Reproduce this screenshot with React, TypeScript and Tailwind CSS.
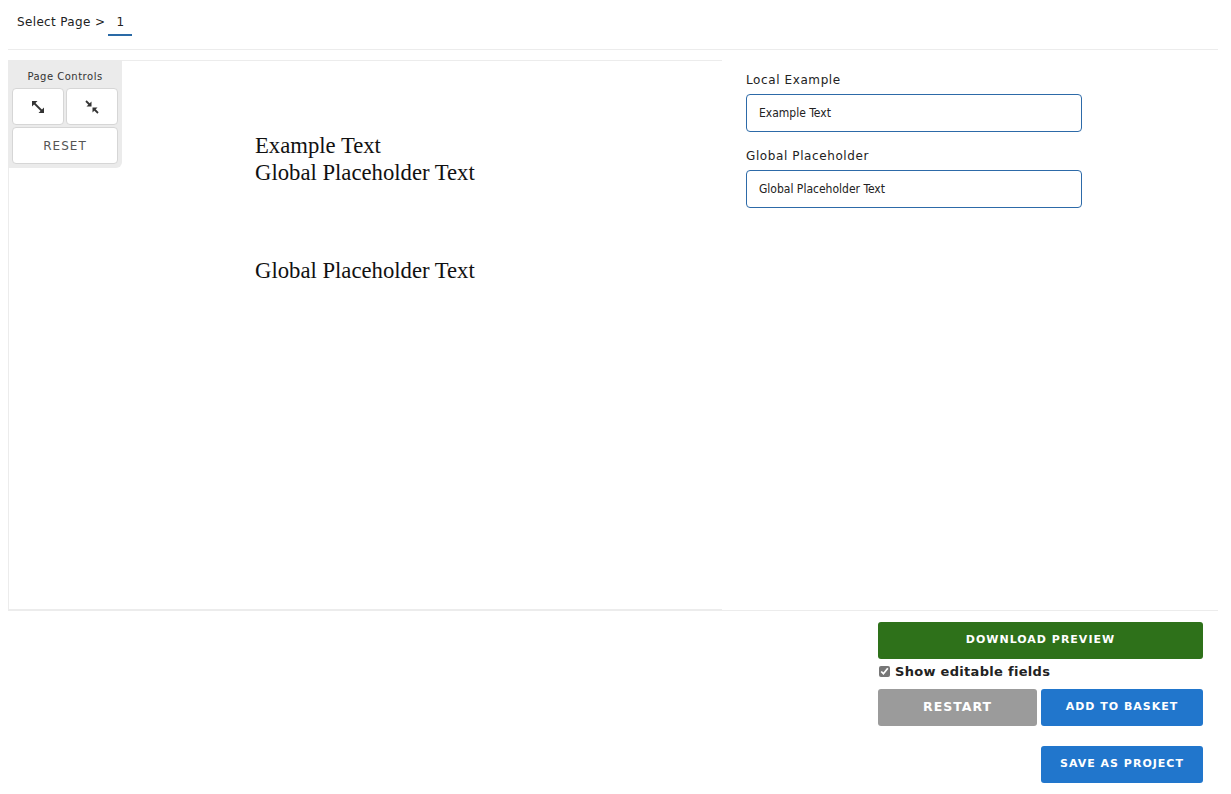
import React from "react";

function ExpandIcon() {
  return (
    <svg width="14" height="14" viewBox="0 0 14 14" fill="none">
      <path d="M3 3 L11 11" stroke="#333" strokeWidth="1.8" />
      <path d="M1 1 H6.5 L1 6.5 Z" fill="#333" />
      <path d="M13 13 H7.5 L13 7.5 Z" fill="#333" />
    </svg>
  );
}

function CompressIcon() {
  return (
    <svg width="14" height="14" viewBox="0 0 14 14" fill="none">
      <path d="M1 1 L5 5" stroke="#333" strokeWidth="1.8" />
      <path d="M9 9 L13 13" stroke="#333" strokeWidth="1.8" />
      <path d="M6.5 6.5 H1.5 L6.5 1.5 Z" fill="#333" />
      <path d="M7.5 7.5 H12.5 L7.5 12.5 Z" fill="#333" />
    </svg>
  );
}

export default function App() {
  return (
    <div className="min-h-[794px] bg-white font-['DejaVu_Sans',Verdana,sans-serif] text-[#222]">
      <div className="ml-2 mr-[13px]">
        {/* Page selector */}
        <div className="flex h-[50px] items-start border-b border-[#ececec] pl-[9px] pt-[14px]">
          <span className="text-[12px] leading-[17px] tracking-[0.35px] text-[#222]">Select Page &gt;</span>
          <span className="ml-[3px] flex h-[22px] w-[24px] items-start justify-center border-b-2 border-[#2a6aa6] text-[12px] leading-[17px] text-[#222]">
            1
          </span>
        </div>

        {/* Editor */}
        <div className="mt-[10px] flex">
          <div className="relative h-[551px] w-[714px] border-l border-t border-b-2 border-[#ececec]">
            <div className="absolute left-[-1px] top-[-1px] w-[114px] rounded-br-[6px] bg-[#ebebeb] px-[4px] pb-[4px] pt-[9px]">
              <div className="text-center text-[10px] tracking-[0.5px] text-[#333]">Page Controls</div>
              <div className="mt-[4px] grid grid-cols-2 gap-[2px]">
                <button className="flex h-[37px] items-center justify-center rounded-[4px] border border-[#d6d6d6] bg-white">
                  <ExpandIcon />
                </button>
                <button className="flex h-[37px] items-center justify-center rounded-[4px] border border-[#d6d6d6] bg-white">
                  <CompressIcon />
                </button>
                <button className="col-span-2 flex h-[37px] items-center justify-center rounded-[4px] border border-[#d6d6d6] bg-white text-[12px] tracking-[1px] text-[#555]">
                  RESET
                </button>
              </div>
            </div>

            <div className="pl-[246px] pt-[71px] font-['Liberation_Serif','Times_New_Roman',serif] text-[22.7px] leading-[27px] text-[#111]">
              <div>Example Text</div>
              <div>Global Placeholder Text</div>
              <div className="mt-[71px]">Global Placeholder Text</div>
            </div>
          </div>

          <div className="flex-1 border-b border-[#ececec] pl-[24px] pt-[11px]">
            <label className="block text-[12px] tracking-[0.6px] text-[#222]">Local Example</label>
            <input
              readOnly
              value="Example Text"
              className="mt-[5px] h-[38px] w-[336px] rounded-[4px] border border-[#2d6aa8] px-[12px] font-['DejaVu_Sans_Condensed','DejaVu_Sans',sans-serif] text-[12px] text-[#222] outline-none"
            />
            <label className="mt-[15px] block text-[12px] tracking-[0.6px] text-[#222]">Global Placeholder</label>
            <input
              readOnly
              value="Global Placeholder Text"
              className="mt-[5px] h-[38px] w-[336px] rounded-[4px] border border-[#2d6aa8] px-[12px] font-['DejaVu_Sans_Condensed','DejaVu_Sans',sans-serif] text-[12px] text-[#222] outline-none"
            />
          </div>
        </div>

        {/* Actions */}
        <div className="flex justify-end pr-[15px] pt-[11px]">
          <div className="w-[325px]">
            <button className="flex h-[37px] w-full items-center justify-center rounded-[3px] bg-[#2e711a] text-[11px] font-bold tracking-[1px] text-white">
              DOWNLOAD PREVIEW
            </button>
            <label className="mt-[3px] flex items-center gap-[5px] pl-[1px]">
              <input type="checkbox" defaultChecked className="h-[11px] w-[11px] accent-[#777]" />
              <span className="text-[13px] font-bold tracking-[0.3px] text-[#222]">Show editable fields</span>
            </label>
            <div className="mt-[7px] flex gap-[4px]">
              <button className="flex h-[37px] w-[159px] items-center justify-center rounded-[3px] bg-[#9b9b9b] text-[12.5px] font-bold tracking-[1px] text-white">
                RESTART
              </button>
              <button className="flex h-[37px] flex-1 items-center justify-center rounded-[3px] bg-[#2176cc] text-[11px] font-bold tracking-[1px] text-white">
                ADD TO BASKET
              </button>
            </div>
            <div className="mt-[20px] flex justify-end">
              <button className="flex h-[37px] w-[162px] items-center justify-center rounded-[3px] bg-[#2176cc] text-[11px] font-bold tracking-[1px] text-white">
                SAVE AS PROJECT
              </button>
            </div>
          </div>
        </div>
      </div>
    </div>
  );
}
